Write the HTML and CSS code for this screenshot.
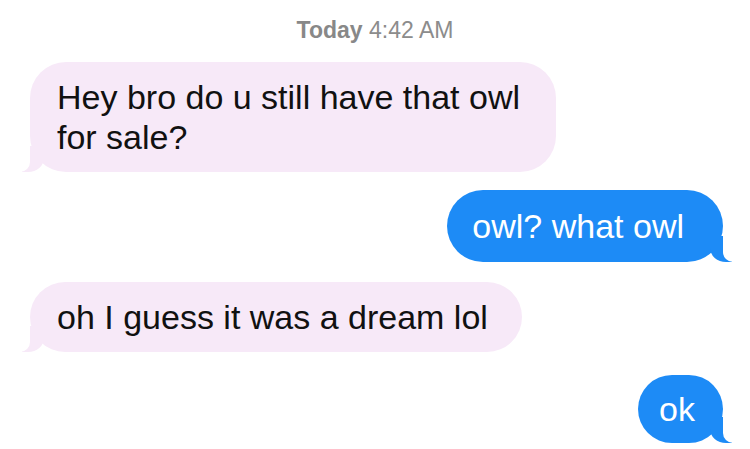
FILE: index.html
```html
<!DOCTYPE html>
<html>
<head>
<meta charset="utf-8">
<link rel="stylesheet" href="styles.css">
</head>
<body>
<div class="chat">
  <div class="stamp"><b>Today</b> 4:42 AM</div>
  <div class="msg in m1">Hey bro do u still have that owl for sale?</div>
  <div class="msg out m2">owl? what owl</div>
  <div class="msg in m3">oh I guess it was a dream lol</div>
  <div class="msg out m4">ok</div>
</div>
</body>
</html>
```
FILE: styles.css
```css
html, body {
  margin: 0;
  padding: 0;
  background: #ffffff;
}
.chat {
  width: 750px;
  height: 449px;
  box-sizing: border-box;
  display: flex;
  flex-direction: column;
  font-family: "Liberation Sans", Arial, sans-serif;
  padding-top: 17px;
  overflow: hidden;
}
.stamp {
  text-align: center;
  color: #8c8c8c;
  font-size: 23px;
  line-height: 26px;
  height: 26px;
}
.stamp b {
  font-weight: 700;
  color: #888888;
}
.msg {
  position: relative;
  font-size: 34px;
  line-height: 40px;
  border-radius: 36px;
  box-sizing: border-box;
  width: fit-content;
}
.in {
  align-self: flex-start;
  margin-left: 30px;
  background: #f7e9f8;
  color: #111111;
  padding: 15px 34px 15px 27px;
}
.out {
  align-self: flex-end;
  margin-right: 27px;
  background: #1d8bf6;
  color: #ffffff;
  padding: 16px 39px 16px 25px;
}
.m1 { margin-top: 19px; max-width: 526px; padding-right: 30px; }
.m2 { margin-top: 18px; }
.m3 { margin-top: 20px; }
.m4 { margin-top: 23px; padding: 14px 28px 14px 21px; }

.in::before,
.in::after,
.out::before,
.out::after {
  content: "";
  position: absolute;
  bottom: 0;
  height: 26px;
}
.in::before {
  left: -8px;
  width: 22px;
  background: #f7e9f8;
  border-bottom-right-radius: 16px 14px;
}
.in::after {
  left: -26px;
  width: 26px;
  background: #ffffff;
  border-bottom-right-radius: 10px;
}
.out::before {
  right: -9px;
  width: 22px;
  background: #1d8bf6;
  border-bottom-left-radius: 16px 14px;
}
.out::after {
  right: -26px;
  width: 26px;
  background: #ffffff;
  border-bottom-left-radius: 10px;
}
```
